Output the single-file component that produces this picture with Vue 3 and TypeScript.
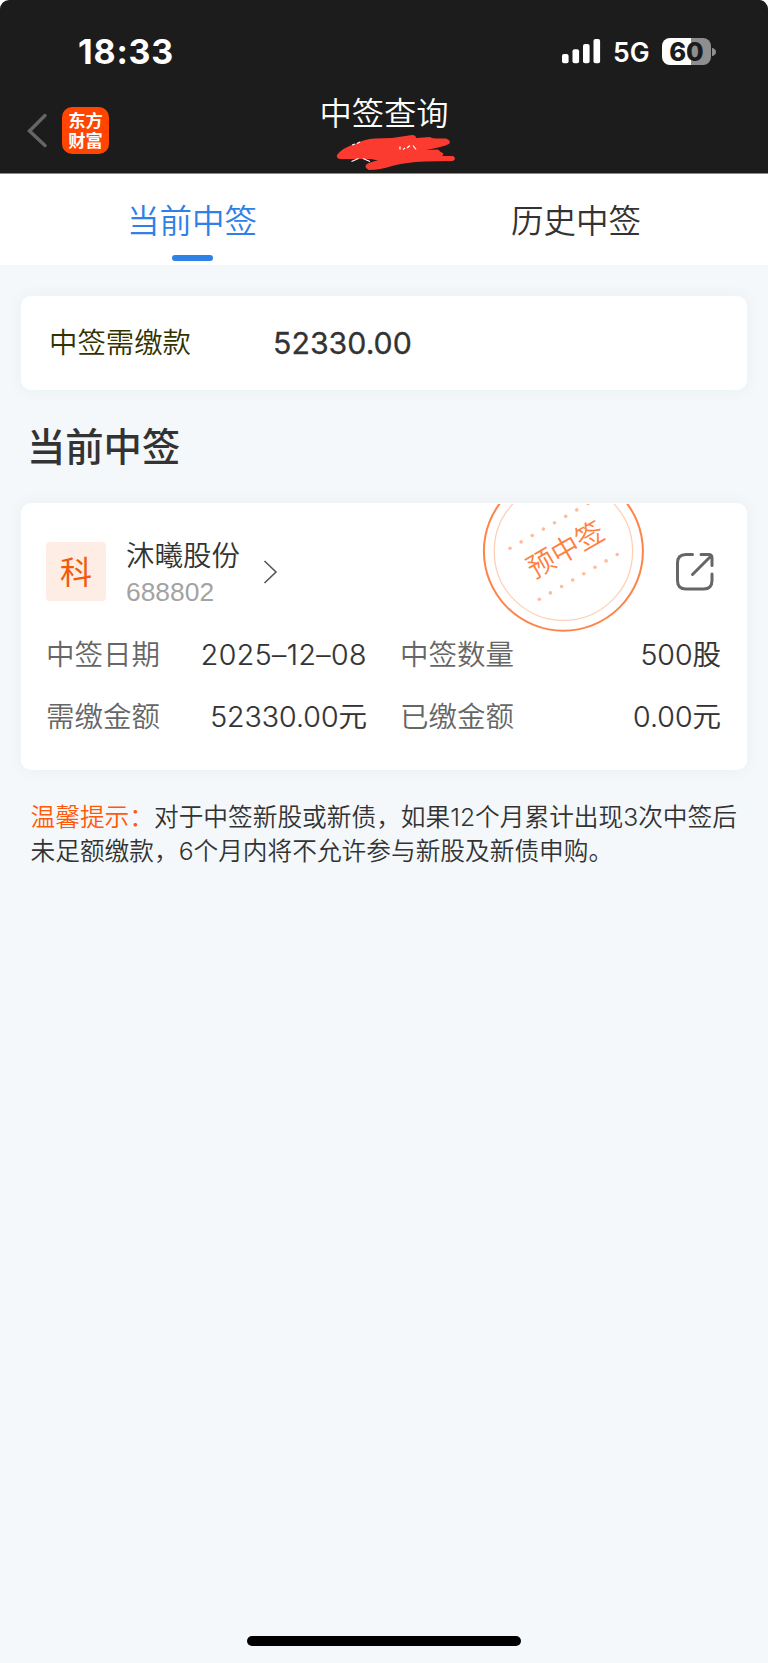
<script setup lang="ts">
interface Field {
  label: string
  value: string
  date?: boolean
}

const fields: Field[] = [
  { label: '中签日期', value: '2025–12–08', date: true },
  { label: '中签数量', value: '500股' },
  { label: '需缴金额', value: '52330.00元' },
  { label: '已缴金额', value: '0.00元' },
]

const dots = Array.from({ length: 8 }, (_, i) => i)
</script>

<template>
  <main class="screen">
    <header class="top">
      <div class="status">
        <span class="time">18:33</span>
        <div class="status-right">
          <svg class="signal" width="39" height="25" viewBox="0 0 39 25" fill="#fff">
            <rect x="0" y="15" width="6.6" height="9.3" rx="2" />
            <rect x="10.5" y="10.3" width="6.6" height="14" rx="2" />
            <rect x="21" y="5" width="6.6" height="19.3" rx="2" />
            <rect x="31.5" y="0" width="6.6" height="24.3" rx="2" />
          </svg>
          <span class="net">5G</span>
          <div class="battery">
            <div class="cell">60</div>
            <svg width="4" height="10" viewBox="0 0 4 10"><path d="M0 0.8Q4 2 4 5Q4 8 0 9.2Z" fill="#8e8e8e" /></svg>
          </div>
        </div>
      </div>
      <div class="nav">
        <svg class="back" width="21" height="36" viewBox="0 0 21 36" fill="none" stroke="#666" stroke-width="3.4" stroke-linecap="round">
          <path d="M18 2.5L2.5 18L18 32.5" />
        </svg>
        <div class="logo"><span>东方</span><span>财富</span></div>
        <div class="title-box">
          <h1>中签查询</h1>
          <svg class="mark" width="130" height="40" viewBox="0 4 130 40">
            <path d="M7 28Q12 21 25 17Q34 12 45 11.500L62 11L82 8Q86 8 86 11L100 10Q102 12 116 11.500Q122 14 119 17Q113 20 96 23L108 22.500Q110 25 113 26Q114 28 112 29L123 29Q127 31.500 123 34L95 34.500Q76 35 62 39Q50 43 39 43Q33 40 37 37Q40 35 48 33.500L41 32L10 32Q6 31 7 28Z" fill="#fb3b30" />
            <path d="M22 18l3-1M27 16.500l3-1.500M21.500 34.500l7-3M33 31.500l7 3M70 19.500v3M77 21l3-2.500M83 18.500l3 4M75 21l-2 1.500" fill="none" stroke="#fff" stroke-width="1.2" />
          </svg>
        </div>
      </div>
    </header>

    <nav class="tabs">
      <div class="tab active">当前中签</div>
      <div class="tab">历史中签</div>
    </nav>

    <section class="card pay">
      <span class="pay-label">中签需缴款</span>
      <strong class="pay-value">52330.00</strong>
    </section>

    <h2>当前中签</h2>

    <section class="card detail">
      <svg class="stamp" width="164" height="130" viewBox="0 0 164 130">
        <circle cx="81.4" cy="47.2" r="79.5" fill="none" stroke="#ff844a" stroke-width="2" />
        <circle cx="81.4" cy="47.2" r="69.2" fill="none" stroke="#ffd0b8" stroke-width="1.3" />
        <g fill="#ffbc9b">
          <circle v-for="i in dots" :key="'a' + i" :cx="28 + i * 11.13" :cy="44.3 - i * 6.4" r="1.8" />
          <circle v-for="i in dots" :key="'b' + i" :cx="57.3 + i * 11.13" :cy="95.3 - i * 6.4" r="1.8" />
        </g>
        <text x="83.5" y="55.5" text-anchor="middle" transform="rotate(-30 83.5 45.5)" class="stamp-text">预中签</text>
      </svg>
      <div class="stock">
        <span class="badge">科</span>
        <div class="names">
          <span class="name">沐曦股份</span>
          <span class="code">688802</span>
        </div>
        <svg class="chevron" width="15" height="26" viewBox="0 0 15 26" fill="none" stroke="#555" stroke-width="1.6">
          <path d="M1.5 2L13 13L1.5 24" />
        </svg>
        <svg class="share" width="40" height="40" viewBox="0 0 40 40" fill="none" stroke="#666" stroke-width="3" stroke-linecap="round">
          <path d="M17.5 2.500H11Q2.500 2.500 2.500 11V28.500Q2.500 37 11 37H28.500Q37 37 37 28.500V22" />
          <path d="M26 2.500H33.500Q37 2.500 37 6V13.500M36 4L17.500 22.500" />
        </svg>
      </div>
      <dl class="grid">
        <div v-for="f in fields" :key="f.label" class="field">
          <dt>{{ f.label }}</dt>
          <dd :class="{ date: f.date }">{{ f.value }}</dd>
        </div>
      </dl>
    </section>

    <p class="tip"><span class="warn">温馨提示：</span>对于中签新股或新债，如果12个月累计出现3次中签后<br />未足额缴款，6个月内将不允许参与新股及新债申购。</p>

    <div class="home"></div>
  </main>
</template>

<style>
body {
  margin: 0;
  background: #fff;
}
</style>

<style scoped>
* {
  box-sizing: border-box;
}
.screen {
  width: 768px;
  height: 1663px;
  display: flex;
  flex-direction: column;
  background: linear-gradient(#fff 20px, #f4f8fa 20px);
  color: #333;
  font-family: Inter, "Noto Sans CJK SC", sans-serif;
  font-weight: 350;
  white-space: nowrap;
}
.top {
  height: 174px;
  flex: none;
  background: #1c1c1c;
  border-bottom: 1px solid #8a8a8a;
  border-radius: 9px 9px 0 0;
  color: #fff;
}
.status {
  height: 96px;
  padding: 7px 52px 0 78px;
  display: flex;
  align-items: center;
  justify-content: space-between;
}
.time {
  font-size: 34px;
  font-weight: 700;
  line-height: 40px;
  letter-spacing: 0.8px;
}
.status-right {
  display: flex;
  align-items: center;
}
.net {
  margin-left: 12px;
  width: 38px;
  font-size: 26.5px;
  font-weight: 600;
  line-height: 30px;
}
.battery {
  display: flex;
  align-items: center;
  gap: 1px;
  margin-left: 11px;
}
.cell {
  width: 49px;
  height: 27px;
  border-radius: 8px;
  background: linear-gradient(90deg, #fff 60%, #8e8e8e 60%);
  color: #1c1c1c;
  font-size: 25.5px;
  line-height: 27px;
  font-weight: 800;
  text-align: center;
}
.nav {
  display: grid;
  grid-template-columns: 35px 180px 284px;
  grid-template-areas: "back logo title";
  padding-left: 27px;
}
.back {
  grid-area: back;
  margin-top: 17px;
}
.logo {
  grid-area: logo;
  width: 47px;
  height: 47px;
  margin-top: 11px;
  padding-top: 3px;
  border-radius: 10px;
  background: #ff4500;
  display: flex;
  flex-direction: column;
  align-items: center;
  font: 700 17.3px/19.5px "Noto Sans CJK SC", sans-serif;
}
.title-box {
  grid-area: title;
  display: flex;
  flex-direction: column;
  align-items: center;
}
h1 {
  margin: 0;
  font-size: 32.3px;
  line-height: 36px;
  font-weight: 350;
}
.mark {
  margin: -1px 0 0 22px;
}
.tabs {
  height: 91px;
  flex: none;
  display: flex;
  background: #fff;
}
.tab {
  flex: 1;
  display: flex;
  flex-direction: column;
  align-items: center;
  padding-top: 27px;
  font-size: 32.5px;
  line-height: 42px;
}
.active {
  color: #2f80e7;
}
.active::after {
  content: "";
  width: 41px;
  height: 6px;
  margin-top: 12px;
  border-radius: 3px;
  background: #2f80e7;
}
.card {
  margin: 0 21px;
  flex: none;
  background: #fff;
  border-radius: 10px;
  box-shadow: 0 0 16px rgba(40, 60, 70, 0.05);
}
.pay {
  height: 94px;
  margin-top: 31px;
  padding-left: 28px;
  display: flex;
  align-items: center;
}
.pay-label {
  width: 224px;
  font-size: 28.4px;
  line-height: 94px;
  color: #333300;
}
.pay-value {
  font-size: 30.3px;
  font-weight: 400;
  -webkit-text-stroke: 0.3px #333;
}
h2 {
  margin: 32px 0 0 27px;
  font-size: 38.3px;
  line-height: 51px;
  font-weight: 500;
}
.detail {
  position: relative;
  height: 267px;
  margin-top: 30px;
  padding: 36px 26px 0 25px;
}
.stamp {
  position: absolute;
  left: 461px;
  top: 1px;
}
.stamp-text {
  font: 350 28px "Noto Sans CJK SC", sans-serif;
  fill: #ff7e42;
}
.stock {
  display: flex;
}
.badge {
  width: 60px;
  height: 59px;
  margin-top: 3px;
  border-radius: 4px;
  background: #fdede4;
  color: #f25a0c;
  font-size: 32px;
  font-weight: 400;
  line-height: 61px;
  text-align: center;
}
.names {
  width: 137px;
  margin-left: 20px;
  display: flex;
  flex-direction: column;
}
.name {
  font-size: 28.5px;
  line-height: 34px;
}
.code {
  font: 26.4px/38px "Liberation Sans", sans-serif;
  color: #a3a3a3;
}
.chevron {
  margin-top: 20px;
}
.share {
  margin: 13px 6px 0 auto;
}
.grid {
  margin: 13px 0 0;
  display: grid;
  grid-template-columns: 321px 321px;
  column-gap: 33px;
}
.field {
  height: 62px;
  display: flex;
  justify-content: space-between;
  font-size: 28.5px;
  line-height: 62px;
}
dt {
  color: #666;
}
dd {
  margin: 0;
  -webkit-text-stroke: 0.2px #333;
}
.date {
  letter-spacing: 0.45px;
}
.tip {
  margin: 30px 0 0 30.5px;
  font-size: 24.7px;
  line-height: 34px;
}
.warn {
  color: #ff5a0a;
}
.home {
  width: 274px;
  height: 10px;
  margin: auto auto 17px;
  border-radius: 5px;
  background: #000;
}
</style>
